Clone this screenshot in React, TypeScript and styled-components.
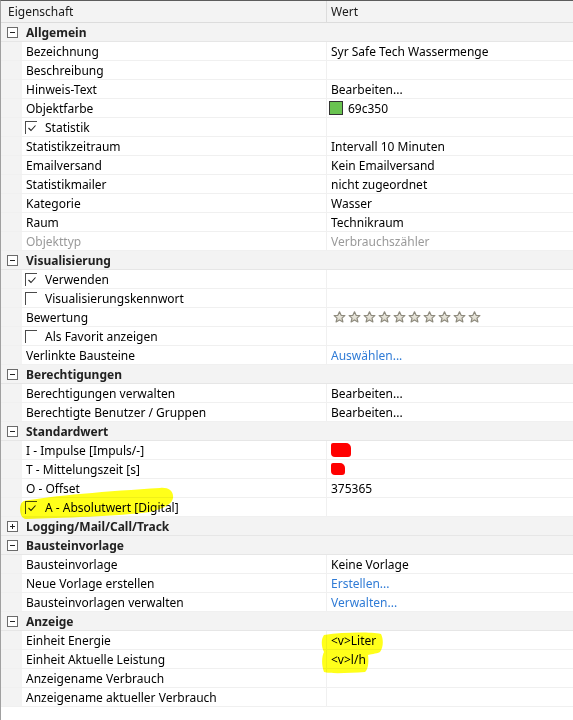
import { memo } from "react";
import styled, { createGlobalStyle } from "styled-components";

const GlobalStyle = createGlobalStyle`
  html, body {
    margin: 0;
    padding: 0;
    background: #ffffff;
  }
  body {
    font-family: "Noto Sans", "Open Sans", "Liberation Sans", sans-serif;
    font-size: 12px;
    color: #000;
  }
`;

type Cell =
  | { kind: "text"; text: string; tone?: "muted" | "link" }
  | { kind: "color"; hex: string; text: string }
  | { kind: "stars"; count: number }
  | { kind: "redact"; w: number; h: number }
  | { kind: "empty" };

type Row =
  | { type: "group"; title: string; open: boolean }
  | { type: "prop"; name: string; value?: Cell; check?: boolean; muted?: boolean };

const rows: Row[] = [
  { type: "group", title: "Allgemein", open: true },
  { type: "prop", name: "Bezeichnung", value: { kind: "text", text: "Syr Safe Tech Wassermenge" } },
  { type: "prop", name: "Beschreibung" },
  { type: "prop", name: "Hinweis-Text", value: { kind: "text", text: "Bearbeiten..." } },
  { type: "prop", name: "Objektfarbe", value: { kind: "color", hex: "#69c350", text: "69c350" } },
  { type: "prop", name: "Statistik", check: true },
  { type: "prop", name: "Statistikzeitraum", value: { kind: "text", text: "Intervall 10 Minuten" } },
  { type: "prop", name: "Emailversand", value: { kind: "text", text: "Kein Emailversand" } },
  { type: "prop", name: "Statistikmailer", value: { kind: "text", text: "nicht zugeordnet" } },
  { type: "prop", name: "Kategorie", value: { kind: "text", text: "Wasser" } },
  { type: "prop", name: "Raum", value: { kind: "text", text: "Technikraum" } },
  { type: "prop", name: "Objekttyp", muted: true, value: { kind: "text", text: "Verbrauchszähler", tone: "muted" } },
  { type: "group", title: "Visualisierung", open: true },
  { type: "prop", name: "Verwenden", check: true },
  { type: "prop", name: "Visualisierungskennwort", check: false },
  { type: "prop", name: "Bewertung", value: { kind: "stars", count: 10 } },
  { type: "prop", name: "Als Favorit anzeigen", check: false },
  { type: "prop", name: "Verlinkte Bausteine", value: { kind: "text", text: "Auswählen...", tone: "link" } },
  { type: "group", title: "Berechtigungen", open: true },
  { type: "prop", name: "Berechtigungen verwalten", value: { kind: "text", text: "Bearbeiten..." } },
  { type: "prop", name: "Berechtigte Benutzer / Gruppen", value: { kind: "text", text: "Bearbeiten..." } },
  { type: "group", title: "Standardwert", open: true },
  { type: "prop", name: "I - Impulse [Impuls/-]", value: { kind: "redact", w: 20, h: 14 } },
  { type: "prop", name: "T - Mittelungszeit [s]", value: { kind: "redact", w: 14, h: 12 } },
  { type: "prop", name: "O - Offset", value: { kind: "text", text: "375365" } },
  { type: "prop", name: "A - Absolutwert [Digital]", check: true },
  { type: "group", title: "Logging/Mail/Call/Track", open: false },
  { type: "group", title: "Bausteinvorlage", open: true },
  { type: "prop", name: "Bausteinvorlage", value: { kind: "text", text: "Keine Vorlage" } },
  { type: "prop", name: "Neue Vorlage erstellen", value: { kind: "text", text: "Erstellen...", tone: "link" } },
  { type: "prop", name: "Bausteinvorlagen verwalten", value: { kind: "text", text: "Verwalten...", tone: "link" } },
  { type: "group", title: "Anzeige", open: true },
  { type: "prop", name: "Einheit Energie", value: { kind: "text", text: "<v>Liter" } },
  { type: "prop", name: "Einheit Aktuelle Leistung", value: { kind: "text", text: "<v>l/h" } },
  { type: "prop", name: "Anzeigename Verbrauch" },
  { type: "prop", name: "Anzeigename aktueller Verbrauch" },
];

const Grid = () => (
  <Frame>
    <HeaderRow>
      <HeaderCell>Eigenschaft</HeaderCell>
      <HeaderCell>Wert</HeaderCell>
    </HeaderRow>
    {rows.map((row, i) =>
      row.type === "group" ? (
        <GroupRow key={i}>
          <Gutter>
            <Expander open={row.open} />
          </Gutter>
          <GroupTitle>{row.title}</GroupTitle>
        </GroupRow>
      ) : (
        <PropRow key={i}>
          <Gutter />
          <NameCell $muted={row.muted}>
            {row.check !== undefined && <CheckBox checked={row.check} />}
            {row.name}
          </NameCell>
          <ValueCell>{row.value && <Value cell={row.value} />}</ValueCell>
        </PropRow>
      )
    )}
    {/* highlighter strokes drawn over the grid */}
    <Marker viewBox="0 0 573 720" width={573} height={720}>
      <path
        d="M24 501 C50 496 110 491 160 488 C168 487 174 491 173 498 C172 504 165 508 150 512 C120 516 60 518 26 519 C19 519 18 503 24 501 Z"
        fill="#ffff1a"
      />
      <path
        d="M324 635 C345 632 370 632 381 634 C384 640 383 648 380 652 C376 654 370 654 368 655 C369 662 368 670 365 672 C350 673 330 674 324 672 C321 664 322 656 324 652 C321 646 321 639 324 635 Z"
        fill="#ffff1a"
      />
    </Marker>
  </Frame>
);

const Value = ({ cell }: { cell: Cell }) => {
  switch (cell.kind) {
    case "text":
      return <ValueText $tone={cell.tone}>{cell.text}</ValueText>;
    case "color":
      return (
        <>
          <Swatch $hex={cell.hex} />
          <ValueText>{cell.text}</ValueText>
        </>
      );
    case "stars":
      return (
        <Stars>
          {Array(cell.count)
            .fill(0)
            .map((_, i) => (
              <Star key={i} />
            ))}
        </Stars>
      );
    case "redact":
      return <Redact style={{ width: cell.w, height: cell.h }} />;
    default:
      return null;
  }
};

const Expander = ({ open }: { open: boolean }) => (
  <svg width="11" height="11" viewBox="0 0 11 11">
    <rect x="0.5" y="0.5" width="10" height="10" fill="#fff" stroke="#6b6b6b" />
    <line x1="3" y1="5.5" x2="8" y2="5.5" stroke="#222" />
    {!open && <line x1="5.5" y1="3" x2="5.5" y2="8" stroke="#222" />}
  </svg>
);

const CheckBox = ({ checked }: { checked: boolean }) => (
  <CheckMark>
    {checked && (
      <svg width="10" height="10" viewBox="0 0 10 10">
        <path d="M1.5 5 L4 7.5 L8.5 2.5" fill="none" stroke="#222" strokeWidth="1.1" />
      </svg>
    )}
  </CheckMark>
);

const Star = () => (
  <svg width="13" height="12" viewBox="0 0 13 12">
    <defs>
      <linearGradient id="sg" x1="0" y1="0" x2="0" y2="1">
        <stop offset="0" stopColor="#f4f2ea" />
        <stop offset="1" stopColor="#d8d5c8" />
      </linearGradient>
    </defs>
    <path
      d="M6.5 0.8 L8.1 4.3 L11.9 4.6 L9 7.1 L9.9 10.9 L6.5 8.9 L3.1 10.9 L4 7.1 L1.1 4.6 L4.9 4.3 Z"
      fill="url(#sg)"
      stroke="#8e8b7e"
      strokeWidth="1.2"
      strokeLinejoin="round"
    />
  </svg>
);

export default memo(function App() {
  return (
    <>
      <GlobalStyle />
      <Grid />
    </>
  );
});

const Frame = styled.div`
  position: relative;
  width: 573px;
  height: 720px;
  box-sizing: border-box;
  border-top: 1px solid #5c5c5c;
  border-left: 1px solid #a0a0a0;
  background: #fff;
  overflow: hidden;
`;

const HeaderRow = styled.div`
  display: grid;
  grid-template-columns: 325px 1fr;
  height: 21px;
  background: #f3f3f3;
  border-bottom: 1px solid #dcdcdc;
`;

const HeaderCell = styled.div`
  display: flex;
  align-items: center;
  padding-left: 7px;
  color: #1a1a1a;
  & + & {
    border-left: 1px solid #dcdcdc;
    padding-left: 4px;
  }
`;

const GroupRow = styled.div`
  display: grid;
  grid-template-columns: 21px 1fr;
  height: 18px;
  background: #f3f3f3;
  border-bottom: 1px solid #e6e6e6;
`;

const Gutter = styled.div`
  display: flex;
  align-items: center;
  justify-content: flex-end;
  padding-right: 4px;
  background: #f3f3f3;
`;

const GroupTitle = styled.div`
  display: flex;
  align-items: center;
  padding-left: 4px;
  font-weight: 700;
  color: #222;
`;

const PropRow = styled.div`
  display: grid;
  grid-template-columns: 21px 304px 1fr;
  height: 18px;
  border-bottom: 1px solid #f0f0f0;
`;

const NameCell = styled.div<{ $muted?: boolean }>`
  display: flex;
  align-items: center;
  padding-left: 4px;
  color: ${(p) => (p.$muted ? "#9a9a9a" : "#000")};
  white-space: nowrap;
  overflow: hidden;
`;

const ValueCell = styled.div`
  display: flex;
  align-items: center;
  gap: 5px;
  padding-left: 4px;
  border-left: 1px solid #f0f0f0;
  white-space: nowrap;
  overflow: hidden;
`;

const ValueText = styled.span<{ $tone?: "muted" | "link" }>`
  color: ${(p) => (p.$tone === "muted" ? "#9a9a9a" : p.$tone === "link" ? "#2f7bd6" : "#000")};
`;

const Swatch = styled.span<{ $hex: string }>`
  width: 14px;
  height: 14px;
  margin-left: -2px;
  box-sizing: border-box;
  border: 1px solid #333;
  background: ${(p) => p.$hex};
`;

const Stars = styled.span`
  display: flex;
  gap: 2px;
  padding-left: 2px;
`;

const Redact = styled.span`
  display: inline-block;
  background: #ff0000;
  border-radius: 2px 5px 3px 4px;
`;

const CheckMark = styled.span`
  display: inline-flex;
  align-items: center;
  justify-content: center;
  width: 12px;
  height: 13px;
  margin-left: -1px;
  margin-right: 8px;
  box-sizing: border-box;
  border-left: 1px solid #4a4a4a;
  border-top: 1px solid #4a4a4a;
`;

const Marker = styled.svg`
  position: absolute;
  left: -1px;
  top: -1px;
  pointer-events: none;
  mix-blend-mode: multiply;
`;
